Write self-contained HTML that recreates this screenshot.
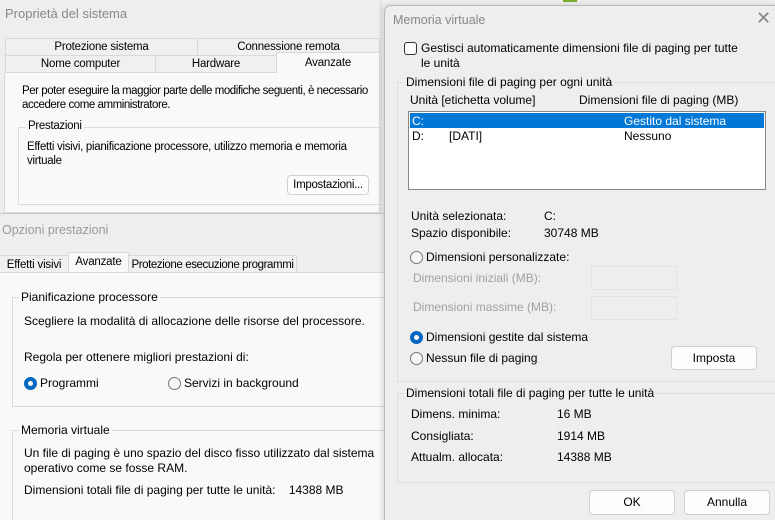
<!DOCTYPE html>
<html><head><meta charset="utf-8"><style>
*{box-sizing:border-box;margin:0;padding:0}
html,body{width:775px;height:520px;overflow:hidden}
body{background:#eeeeee;font-family:"Liberation Sans",sans-serif;font-size:12px;color:#000;position:relative}
.a{position:absolute;white-space:nowrap}
.n{font-size:11.5px;letter-spacing:-0.3px}
.tab{position:absolute;border:1px solid #d9d9d9;background:#f0f0f0;text-align:center;font-size:11.5px;letter-spacing:-0.2px;white-space:nowrap;overflow:hidden}
.grp{position:absolute;border:1px solid #dcdcdc}
.btn{position:absolute;border:1px solid #d0d0d0;background:#fdfdfd;border-radius:4px;text-align:center}
.rad{position:absolute;width:13px;height:13px;border-radius:50%;border:1px solid #777;background:#f7f7f7}
.rad.on{border:4px solid #0067c0;background:#fff}
.g{color:#a0a0a0}
</style></head><body>
<div class="a" style="left:5px;top:6px;font-size:13px;color:#888">Proprietà del sistema</div>
<div class="a" style="left:380px;top:0;width:2px;height:213px;background:#e2e2e2"></div>
<div class="tab" style="left:5px;top:38px;width:193px;height:18px;line-height:17px">Protezione sistema</div>
<div class="tab" style="left:197px;top:38px;width:183px;height:18px;line-height:17px">Connessione remota</div>
<div class="tab" style="left:5px;top:55px;width:151px;height:18px;line-height:17px">Nome computer</div>
<div class="tab" style="left:155px;top:55px;width:122px;height:18px;line-height:17px">Hardware</div>
<div class="tab" style="left:276px;top:52px;width:104px;height:22px;line-height:20px;background:#f9f9f9;border-bottom:none">Avanzate</div>
<div class="a" style="left:4px;top:73px;width:376px;height:140px;background:#f9f9f9;border:1px solid #d9d9d9;border-top:none"></div>
<div class="a n" style="left:22px;top:84px;line-height:14px;letter-spacing:-0.45px">Per poter eseguire la maggior parte delle modifiche seguenti, è necessario<br>accedere come amministratore.</div>
<div class="grp" style="left:18px;top:127px;width:362px;height:78px;background:#f9f9f9"></div>
<div class="a n" style="left:26px;top:120px;background:#f9f9f9;padding:0 2px">Prestazioni</div>
<div class="a n" style="left:27px;top:140px;line-height:14px">Effetti visivi, pianificazione processore, utilizzo memoria e memoria<br>virtuale</div>
<div class="btn n" style="left:287px;top:175px;width:82px;height:20px;line-height:18px">Impostazioni...</div>
<div class="a" style="left:0;top:213px;width:385px;height:307px;background:#eeeeee;border-top:1px solid #c8c8c8"></div>
<div class="a" style="left:2px;top:223px;font-size:12.5px;color:#999">Opzioni prestazioni</div>
<div class="tab" style="left:0;top:255px;width:69px;height:18px;line-height:18px;border-left:none">Effetti visivi</div>
<div class="tab" style="left:68px;top:252px;width:61px;height:22px;line-height:19px;background:#f9f9f9;border-bottom:none">Avanzate</div>
<div class="tab" style="left:128px;top:255px;width:169px;height:18px;line-height:18px;letter-spacing:-0.4px">Protezione esecuzione programmi</div>
<div class="a" style="left:0;top:272px;width:385px;height:248px;background:#f9f9f9;border-top:1px solid #d9d9d9"></div>
<div class="grp" style="left:12px;top:297px;width:373px;height:110px"></div>
<div class="a" style="left:19px;top:290px;background:#f9f9f9;padding:0 2px">Pianificazione processore</div>
<div class="a" style="left:24px;top:314px">Scegliere la modalità di allocazione delle risorse del processore.</div>
<div class="a" style="left:24px;top:350px">Regola per ottenere migliori prestazioni di:</div>
<div class="rad on" style="left:24px;top:377px"></div>
<div class="a" style="left:40px;top:376px">Programmi</div>
<div class="rad" style="left:168px;top:377px"></div>
<div class="a" style="left:184px;top:376px">Servizi in background</div>
<div class="grp" style="left:12px;top:430px;width:373px;height:100px"></div>
<div class="a" style="left:19px;top:423px;background:#f9f9f9;padding:0 2px">Memoria virtuale</div>
<div class="a" style="left:24px;top:446px;line-height:15px">Un file di paging è uno spazio del disco fisso utilizzato dal sistema<br>operativo come se fosse RAM.</div>
<div class="a" style="left:24px;top:483px">Dimensioni totali file di paging per tutte le unità:&nbsp;&nbsp;&nbsp; 14388 MB</div>
<div class="a" style="left:563px;top:0;width:14px;height:2px;background:#7ab030"></div>
<div class="a" style="left:384px;top:5px;width:395px;height:520px;background:#eeeeee;border:1px solid #b8b8b8;border-radius:7px 0 0 0;box-shadow:-2px 0 6px rgba(0,0,0,.12)"></div>
<div class="a" style="left:393px;top:13px;font-size:12.5px;color:#888">Memoria virtuale</div>
<div class="a" style="left:756px;top:8px;font-size:18px;color:#888;font-weight:200">✕</div>
<div class="a" style="left:404px;top:42px;width:13px;height:13px;border:1px solid #333;border-radius:3px;background:#fff"></div>
<div class="a" style="left:421px;top:41px;line-height:15px">Gestisci automaticamente dimensioni file di paging per tutte<br>le unità</div>
<div class="grp" style="left:397px;top:82px;width:384px;height:300px"></div>
<div class="a" style="left:404px;top:75px;background:#eeeeee;padding:0 2px">Dimensioni file di paging per ogni unità</div>
<div class="a" style="left:410px;top:93px">Unità [etichetta volume]</div>
<div class="a" style="left:579px;top:93px">Dimensioni file di paging (MB)</div>
<div class="a" style="left:408px;top:111px;width:358px;height:79px;background:#fff;border:1px solid #888"></div>
<div class="a" style="left:410px;top:113px;width:354px;height:15px;background:#0078d7"></div>
<div class="a" style="left:412px;top:114px;color:#fff">C:</div>
<div class="a" style="left:624px;top:114px;color:#fff">Gestito dal sistema</div>
<div class="a" style="left:412px;top:129px">D:</div>
<div class="a" style="left:449px;top:129px">[DATI]</div>
<div class="a" style="left:624px;top:129px">Nessuno</div>
<div class="a" style="left:411px;top:209px">Unità selezionata:</div>
<div class="a" style="left:544px;top:209px">C:</div>
<div class="a" style="left:411px;top:226px">Spazio disponibile:</div>
<div class="a" style="left:544px;top:226px">30748 MB</div>
<div class="rad" style="left:410px;top:251px"></div>
<div class="a" style="left:426px;top:250px">Dimensioni personalizzate:</div>
<div class="a g" style="left:413px;top:271px">Dimensioni iniziali (MB):</div>
<div class="a" style="left:591px;top:266px;width:86px;height:24px;border:1px solid #e2e2e2"></div>
<div class="a g" style="left:413px;top:300px">Dimensioni massime (MB):</div>
<div class="a" style="left:591px;top:296px;width:86px;height:24px;border:1px solid #e2e2e2"></div>
<div class="rad on" style="left:410px;top:331px"></div>
<div class="a" style="left:426px;top:330px">Dimensioni gestite dal sistema</div>
<div class="rad" style="left:410px;top:352px"></div>
<div class="a" style="left:426px;top:351px">Nessun file di paging</div>
<div class="btn" style="left:671px;top:346px;width:86px;height:24px;line-height:22px">Imposta</div>
<div class="grp" style="left:397px;top:393px;width:384px;height:90px"></div>
<div class="a" style="left:404px;top:386px;background:#eeeeee;padding:0 2px">Dimensioni totali file di paging per tutte le unità</div>
<div class="a" style="left:411px;top:407px">Dimens. minima:</div>
<div class="a" style="left:557px;top:407px">16 MB</div>
<div class="a" style="left:411px;top:429px">Consigliata:</div>
<div class="a" style="left:557px;top:429px">1914 MB</div>
<div class="a" style="left:411px;top:450px">Attualm. allocata:</div>
<div class="a" style="left:557px;top:450px">14388 MB</div>
<div class="btn" style="left:589px;top:490px;width:86px;height:25px;line-height:23px">OK</div>
<div class="btn" style="left:684px;top:490px;width:86px;height:25px;line-height:23px">Annulla</div>
</body></html>
